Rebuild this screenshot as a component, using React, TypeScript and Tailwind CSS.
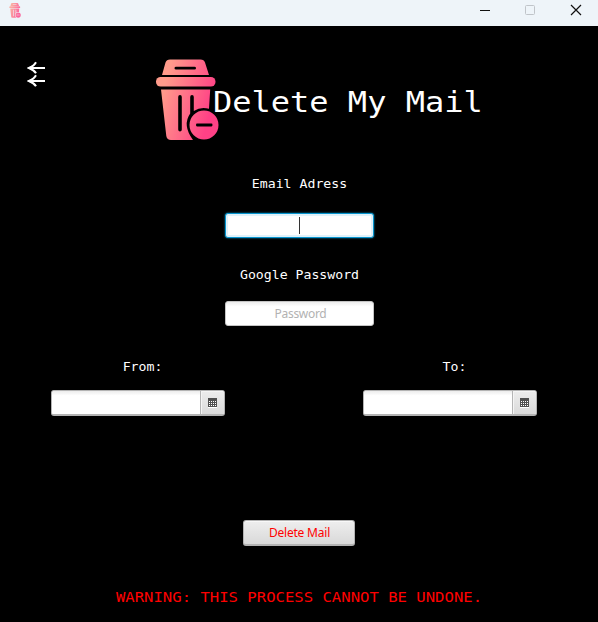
import React from "react";

const mono = "font-['DejaVu_Sans_Mono',monospace] whitespace-pre text-white";

function Trash({ className, id }: { className: string; id: string }) {
  return (
    <svg className={className} viewBox="0 0 64 82" fill="none">
      <defs>
        <linearGradient id={id} x1="5" y1="20" x2="60" y2="35" gradientUnits="userSpaceOnUse">
          <stop offset="0.1" stopColor="#ff9b8b" />
          <stop offset="1" stopColor="#ff4186" />
        </linearGradient>
      </defs>
      <g fill={`url(#${id})`}>
        <path fillRule="evenodd" d="M7 16 10.500 3.500Q11.500 .5 15 .5H45.500Q49 .5 50 3.500L54 16ZM21 7.800Q19.500 7.800 19.500 9.200T21 10.600H39.500Q41 10.600 41 9.200T39.500 7.800Z" />
        <rect x="1" y="18" width="59.500" height="9.500" rx="4.600" />
        <path fillRule="evenodd" d="M6 30.500H55.200L54 49.800A18 18 0 0 0 38.800 52V38Q38.800 36 37 36T35.200 38V54.500Q27 66 38 81H16Q12 81 11.300 77ZM23.200 38V70.500Q23.200 72.500 25 72.500T26.800 70.500V38Q26.800 36 25 36T23.200 38Z" />
        <path fillRule="evenodd" d="M63.500 66A14.500 14.500 0 1 1 34.500 66A14.500 14.500 0 1 1 63.500 66ZM42 64.600Q41 64.600 41 66T42 67.400H56.500Q57.500 67.400 57.500 66T56.500 64.600Z" />
      </g>
    </svg>
  );
}

function Arrow() {
  return (
    <svg className="block h-[13px] w-[19px]" viewBox="0 0 19 13" fill="none">
      <path d="M2 7H18" stroke="white" strokeWidth="2" />
      <path d="M9 1.300Q7.200 4.900 2 7Q7.200 9.100 9 12.300" stroke="white" strokeWidth="2" />
      <path d="M.5 7 6 4V10Z" fill="white" />
    </svg>
  );
}

function DateField({ label }: { label: string }) {
  return (
    <div className="flex w-[174px] flex-col items-center">
      <label className={`${mono} h-4 origin-center scale-y-[.93] pl-[9px] text-[13.2px] leading-4`}>{label}</label>
      <div className="mt-[15px] flex h-[26px] w-[174px] overflow-hidden rounded-[3px] border border-b-2 border-[#b3b3b3] bg-white">
        <div className="flex-1 bg-linear-to-b from-[#ececec] via-white via-20% to-white" />
        <button className="flex w-6 items-start justify-center border-l border-[#b5b5b5] bg-linear-to-b from-[#ededed] to-[#dadada] pt-[7px] shadow-[inset_1px_1px_0_#f5f5f5]">
          <svg className="h-[10px] w-[9px]" viewBox="0 0 9 10" shapeRendering="crispEdges">
            <path d="M0 0H9V9H0Z" fill="#505050" />
            <path d="M0 9H9V10H0Z" fill="white" />
            <path d="M1 3H2V4H1ZM3 3H4V4H3ZM5 3H6V4H5ZM7 3H8V4H7ZM1 5H2V6H1ZM3 5H4V6H3ZM5 5H6V6H5ZM7 5H8V6H7ZM1 7H2V8H1ZM3 7H4V8H3ZM5 7H6V8H5ZM7 7H8V8H7Z" fill="#fff" />
          </svg>
        </button>
      </div>
    </div>
  );
}

export default function App() {
  return (
    <main className="flex h-[622px] w-[598px] flex-col overflow-hidden bg-black">
      <header className="flex h-[26px] shrink-0 justify-between bg-[#eef4f9]">
        <Trash id="small-bin" className="mt-[3px] ml-[9px] h-[15px] w-[12px] opacity-80" />
        <svg className="h-[26px] w-[138px]" viewBox="0 0 138 26" fill="none">
          <path d="M20 10.500H30" stroke="#111" />
          <rect x="65.500" y="5.500" width="9" height="9" rx="1" stroke="#c0c4c9" />
          <path d="M111 5 121 15M121 5 111 15" stroke="#111" strokeWidth="1.200" />
        </svg>
      </header>
      <section className="flex h-[150px] shrink-0">
        <button className="mt-[35px] ml-[27px] h-[26px] w-[19px]">
          <Arrow />
          <Arrow />
        </button>
        <Trash id="large-bin" className="mt-[33px] ml-[109px] h-[82px] w-16 shrink-0" />
        <h1 className={`${mono} mt-[56px] -ml-[6px] h-10 origin-center scale-y-[.88] text-[32px] leading-10`}>Delete My Mail</h1>
      </section>
      <section className="flex shrink-0 flex-col items-center">
        <label className={`${mono} h-4 scale-y-[.93] pl-px text-[13.2px] leading-4`}>Email Adress</label>
        <div className="mt-[21px] flex h-[25px] w-[149px] items-center justify-center rounded-[3px] border border-[#0795cf] bg-white shadow-[inset_0_0_0_2px_#e0f2fa,0_0_2px_#039ed3]">
          <span className="h-[17px] w-px bg-[#333]" />
        </div>
        <label className={`${mono} mt-[29px] h-4 scale-y-[.93] pl-px text-[13.2px] leading-4`}>Google Password</label>
        <input
          className="mt-[18px] h-[25px] w-[149px] rounded-[3px] border border-[#c4c4c4] bg-white bg-linear-to-b from-[#ededed] via-white via-20% to-white pl-[3px] text-center font-['Noto_Sans',sans-serif] text-[12px] tracking-[-0.300px] placeholder:text-[#b2b2b2]"
          placeholder="Password"
        />
      </section>
      <section className="mt-[33px] flex shrink-0 justify-between pr-[61px] pl-[51px]">
        <DateField label="From:" />
        <DateField label="To:" />
      </section>
      <footer className="mt-[104px] flex flex-col items-center">
        <button className="h-[26px] w-[112px] rounded-[3px] border border-b-2 border-[#b3b3b3] bg-linear-to-b from-[#eee] to-[#d9d9d9] pl-px font-['Noto_Sans',sans-serif] text-[12px] leading-[22px] tracking-[-0.200px] text-[#ff0000] shadow-[inset_0_1px_0_#f8f8f8]">
          Delete Mail
        </button>
        <p className="mt-[41px] h-5 scale-y-[.9] font-['DejaVu_Sans_Mono',monospace] text-[15.600px] leading-5 whitespace-pre text-[#ff0000]">WARNING: THIS PROCESS CANNOT BE UNDONE.</p>
      </footer>
    </main>
  );
}
